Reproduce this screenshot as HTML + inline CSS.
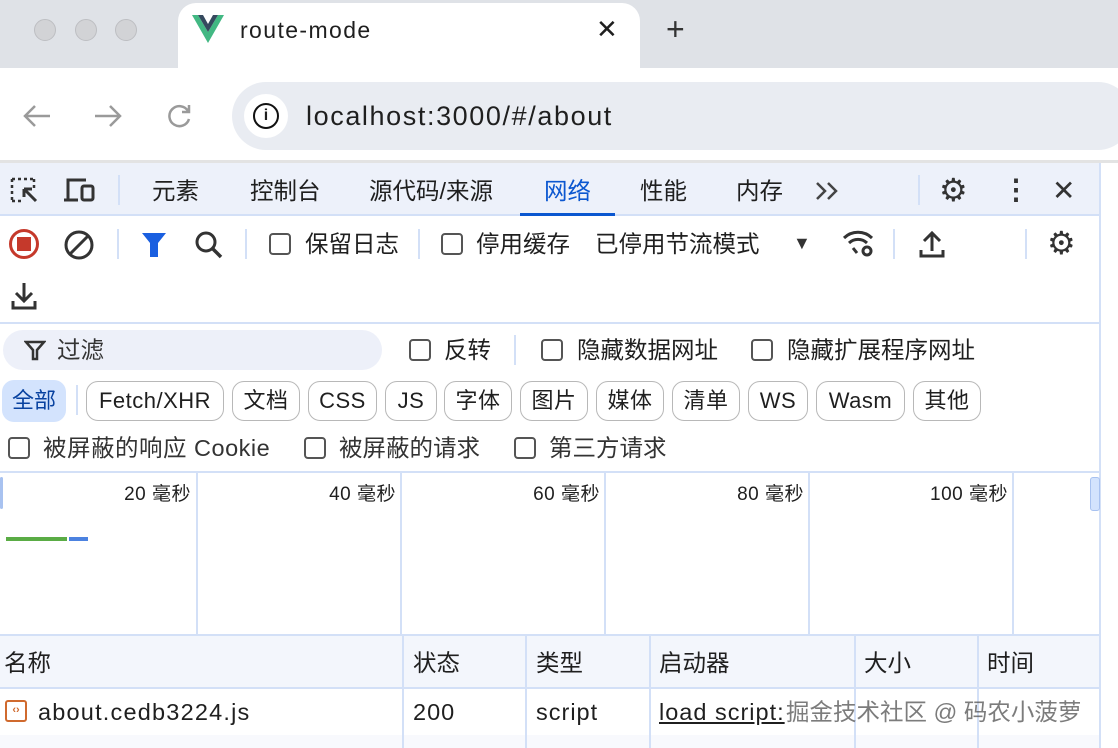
<!DOCTYPE html>
<html><head><meta charset="utf-8"><style>
*{margin:0;padding:0;box-sizing:border-box}
body{width:1118px;height:748px;overflow:hidden;background:#fff;font-family:"Liberation Sans","Noto Sans CJK SC",sans-serif;color:#1f1f1f;position:relative}
.a{position:absolute;white-space:nowrap}
.t{font-size:23.5px;line-height:26px}
.cb{position:absolute;width:20px;height:20px;border:2px solid #555;border-radius:4px}
.chip{position:absolute;top:381px;height:40px;border:1.5px solid #b8b8b8;border-radius:12px;font-size:22px;line-height:37px;text-align:center;color:#1f1f1f;letter-spacing:0.5px}
.vl{position:absolute;width:2px;background:#d3e0f7}
.hl{position:absolute;height:2px;background:#d3e0f7}
.tl{position:absolute;top:484px;width:196px;text-align:right;font-size:19px;line-height:22px;letter-spacing:0.5px}
</style></head><body>
<div class="a" style="left:0;top:0;width:1118px;height:68px;background:#dfe2e7"></div>
<div class="a" style="left:34px;top:19px;width:22px;height:22px;border-radius:50%;background:#d2d3d6;border:1px solid #bdbec2"></div>
<div class="a" style="left:75px;top:19px;width:22px;height:22px;border-radius:50%;background:#d2d3d6;border:1px solid #bdbec2"></div>
<div class="a" style="left:115px;top:19px;width:22px;height:22px;border-radius:50%;background:#d2d3d6;border:1px solid #bdbec2"></div>
<div class="a" style="left:178px;top:3px;width:462px;height:70px;background:#fff;border-radius:18px 18px 0 0"></div>
<svg class="a" style="left:192px;top:15px" width="32" height="28" viewBox="0 0 32 28"><path d="M0 0h6l10 17 10-17h6L16 28z" fill="#42b883"/><path d="M6 0h5l5 9 5-9h5L16 17z" fill="#35495e"/></svg>
<div class="a" style="left:240px;top:16px;font-size:23px;line-height:28px;letter-spacing:1.4px">route-mode</div>
<div class="a" style="left:596px;top:15px;font-size:26px;line-height:28px">✕</div>
<div class="a" style="left:666px;top:12px;font-size:32px;line-height:34px;color:#333">+</div>
<svg class="a" style="left:22px;top:103px" width="30" height="26" viewBox="0 0 30 26"><path d="M28 13H3M13 3L3 13l10 10" stroke="#9a9a9a" stroke-width="2.5" fill="none"/></svg>
<svg class="a" style="left:93px;top:103px" width="30" height="26" viewBox="0 0 30 26"><path d="M2 13h25M17 3l10 10-10 10" stroke="#9a9a9a" stroke-width="2.5" fill="none"/></svg>
<svg class="a" style="left:166px;top:102px" width="28" height="28" viewBox="0 0 28 28"><path d="M22 9a10 10 0 1 0 1 8" stroke="#9a9a9a" stroke-width="2.5" fill="none"/><path d="M23 3v7h-7" stroke="#9a9a9a" stroke-width="2.5" fill="none"/></svg>
<div class="a" style="left:232px;top:82px;width:900px;height:68px;background:#e9ecf2;border-radius:34px"></div>
<div class="a" style="left:244px;top:94px;width:44px;height:44px;background:#fff;border-radius:50%"></div>
<div class="a" style="left:253px;top:103px;width:26px;height:26px;border:2.5px solid #111;border-radius:50%;font-size:16px;font-weight:bold;text-align:center;line-height:21px">i</div>
<div class="a" style="left:306px;top:100px;font-size:27px;line-height:32px;color:#1f1f1f;letter-spacing:1.6px">localhost:3000/#/about</div>
<div class="a" style="left:0;top:160px;width:1118px;height:3px;background:#e3e3e3"></div>
<div class="a" style="left:0;top:163px;width:1100px;height:53px;background:#edf1fa;border-bottom:2px solid #d3e0f7"></div>
<div class="vl" style="left:1099px;top:163px;height:585px"></div>
<svg class="a" style="left:10px;top:177px" width="30" height="28" viewBox="0 0 30 28"><path d="M2 2h22M2 2v22M2 24h10M24 2v10" stroke="#333" stroke-width="2.5" stroke-dasharray="3 3" fill="none"/><path d="M14 12l12 12M14 12v8M14 12h8" stroke="#333" stroke-width="3" fill="none"/></svg>
<svg class="a" style="left:62px;top:176px" width="34" height="28" viewBox="0 0 34 28"><path d="M6 24V4h18M2 24h14" stroke="#333" stroke-width="3" fill="none"/><rect x="20" y="10" width="11" height="14" rx="2" stroke="#333" stroke-width="3" fill="none"/></svg>
<div class="vl" style="left:118px;top:175px;height:30px"></div>
<div class="a t" style="left:152px;top:178px">元素</div>
<div class="a t" style="left:250px;top:178px">控制台</div>
<div class="a t" style="left:369px;top:178px">源代码/来源</div>
<div class="a t" style="left:544px;top:178px;color:#0b57d0">网络</div>
<div class="a" style="left:520px;top:213px;width:95px;height:3px;background:#0b57d0"></div>
<div class="a t" style="left:640px;top:178px">性能</div>
<div class="a t" style="left:736px;top:178px">内存</div>
<svg class="a" style="left:815px;top:181px" width="26" height="20" viewBox="0 0 26 20"><path d="M2 2l8 8-8 8M13 2l8 8-8 8" stroke="#444" stroke-width="2.5" fill="none"/></svg>
<div class="vl" style="left:918px;top:175px;height:30px"></div>
<div class="a" style="left:939px;top:173px;font-size:32px;line-height:34px;color:#333">⚙</div>
<div class="a" style="left:1002px;top:174px;font-size:28px;line-height:32px;font-weight:bold;color:#333">⋮</div>
<div class="a" style="left:1052px;top:175px;font-size:28px;line-height:32px;color:#333">✕</div>
<div class="a" style="left:9px;top:229px;width:30px;height:30px;border:3px solid #c5392b;border-radius:50%"></div>
<div class="a" style="left:17px;top:237px;width:14px;height:14px;background:#c5392b"></div>
<svg class="a" style="left:63px;top:229px" width="32" height="32" viewBox="0 0 32 32"><circle cx="16" cy="16" r="13" stroke="#333" stroke-width="3" fill="none"/><path d="M7 25L25 7" stroke="#333" stroke-width="3"/></svg>
<div class="vl" style="left:117px;top:229px;height:30px"></div>
<svg class="a" style="left:141px;top:232px" width="26" height="26" viewBox="0 0 26 26"><path d="M1 1h24l-8 10v14h-8V11z" fill="#1a5fe0"/></svg>
<svg class="a" style="left:194px;top:230px" width="30" height="30" viewBox="0 0 30 30"><circle cx="12" cy="12" r="9" stroke="#333" stroke-width="3" fill="none"/><path d="M19 19l8 8" stroke="#333" stroke-width="3.5"/></svg>
<div class="vl" style="left:245px;top:229px;height:30px"></div>
<div class="cb" style="left:269px;top:233px;width:22px;height:22px"></div>
<div class="a t" style="left:305px;top:231px">保留日志</div>
<div class="vl" style="left:418px;top:229px;height:30px"></div>
<div class="cb" style="left:441px;top:233px;width:22px;height:22px"></div>
<div class="a t" style="left:476px;top:231px">停用缓存</div>
<div class="a t" style="left:595px;top:231px">已停用节流模式</div>
<div class="a" style="left:793px;top:233px;font-size:18px;color:#333">▼</div>
<svg class="a" style="left:842px;top:229px" width="34" height="28" viewBox="0 0 34 28"><path d="M2 9a20 20 0 0 1 28 0M7 14a13 13 0 0 1 18 0" stroke="#333" stroke-width="3" fill="none"/><path d="M11 19l4 5" stroke="#333" stroke-width="3"/><circle cx="25" cy="22" r="4" stroke="#333" stroke-width="3" fill="none"/></svg>
<div class="vl" style="left:893px;top:229px;height:30px"></div>
<svg class="a" style="left:918px;top:229px" width="28" height="30" viewBox="0 0 28 30"><path d="M14 22V4M6 12l8-8 8 8M3 21v6h22v-6" stroke="#333" stroke-width="3" fill="none"/></svg>
<div class="vl" style="left:1025px;top:229px;height:30px"></div>
<div class="a" style="left:1047px;top:226px;font-size:32px;line-height:34px;color:#333">⚙</div>
<svg class="a" style="left:10px;top:281px" width="28" height="30" viewBox="0 0 28 30"><path d="M14 2v18M6 12l8 8 8-8M3 20v7h22v-7" stroke="#333" stroke-width="3" fill="none"/></svg>
<div class="hl" style="left:0;top:322px;width:1100px"></div>
<div class="a" style="left:3px;top:330px;width:379px;height:40px;background:#edf0f9;border-radius:20px"></div>
<svg class="a" style="left:24px;top:339px" width="22" height="22" viewBox="0 0 22 22"><path d="M2 3h18l-7 8v9h-4v-9z" stroke="#333" stroke-width="2.5" fill="none"/></svg>
<div class="a t" style="left:57px;top:337px;color:#333">过滤</div>
<div class="cb" style="left:409px;top:339px;width:22px;height:22px"></div>
<div class="a t" style="left:444px;top:337px">反转</div>
<div class="vl" style="left:514px;top:335px;height:30px"></div>
<div class="cb" style="left:541px;top:339px;width:22px;height:22px"></div>
<div class="a t" style="left:577px;top:337px">隐藏数据网址</div>
<div class="cb" style="left:751px;top:339px;width:22px;height:22px"></div>
<div class="a t" style="left:787px;top:337px">隐藏扩展程序网址</div>
<div class="a" style="left:2px;top:380px;width:64px;height:42px;background:#d3e3fd;border-radius:12px;font-size:22px;line-height:42px;text-align:center;color:#0842a0">全部</div>
<div class="vl" style="left:76px;top:385px;height:30px"></div>
<div class="chip" style="left:86px;width:138px">Fetch/XHR</div>
<div class="chip" style="left:232px;width:68px">文档</div>
<div class="chip" style="left:308px;width:69px">CSS</div>
<div class="chip" style="left:385px;width:52px">JS</div>
<div class="chip" style="left:444px;width:68px">字体</div>
<div class="chip" style="left:520px;width:68px">图片</div>
<div class="chip" style="left:596px;width:68px">媒体</div>
<div class="chip" style="left:672px;width:68px">清单</div>
<div class="chip" style="left:748px;width:60px">WS</div>
<div class="chip" style="left:816px;width:89px">Wasm</div>
<div class="chip" style="left:913px;width:68px">其他</div>
<div class="cb" style="left:8px;top:437px;width:22px;height:22px"></div>
<div class="a t" style="left:43px;top:435px;color:#333;letter-spacing:0.5px">被屏蔽的响应 Cookie</div>
<div class="cb" style="left:304px;top:437px;width:22px;height:22px"></div>
<div class="a t" style="left:339px;top:435px;color:#333">被屏蔽的请求</div>
<div class="cb" style="left:514px;top:437px;width:22px;height:22px"></div>
<div class="a t" style="left:549px;top:435px;color:#333">第三方请求</div>
<div class="hl" style="left:0;top:471px;width:1100px"></div>
<div class="vl" style="left:196px;top:472px;height:163px"></div>
<div class="vl" style="left:400px;top:472px;height:163px"></div>
<div class="vl" style="left:604px;top:472px;height:163px"></div>
<div class="vl" style="left:808px;top:472px;height:163px"></div>
<div class="vl" style="left:1012px;top:472px;height:163px"></div>
<div class="a" style="left:0;top:477px;width:3px;height:32px;background:#a8c2f0;border-radius:2px"></div>
<div class="a" style="left:1090px;top:477px;width:10px;height:34px;background:#d3e3fd;border:1px solid #a8c2f0;border-radius:3px"></div>
<div class="tl" style="left:-5px">20 毫秒</div>
<div class="tl" style="left:200px">40 毫秒</div>
<div class="tl" style="left:404px">60 毫秒</div>
<div class="tl" style="left:608px">80 毫秒</div>
<div class="tl" style="left:812px">100 毫秒</div>
<div class="a" style="left:6px;top:537px;width:61px;height:4px;background:#5aac45"></div>
<div class="a" style="left:69px;top:537px;width:19px;height:4px;background:#4c82e0"></div>
<div class="hl" style="left:0;top:634px;width:1100px"></div>
<div class="a" style="left:0;top:636px;width:1099px;height:52px;background:#f3f6fc"></div>
<div class="hl" style="left:0;top:687px;width:1100px"></div>
<div class="a" style="left:0;top:735px;width:1099px;height:13px;background:#f8f9fd"></div>
<div class="vl" style="left:402px;top:636px;height:112px"></div>
<div class="vl" style="left:525px;top:636px;height:112px"></div>
<div class="vl" style="left:649px;top:636px;height:112px"></div>
<div class="vl" style="left:854px;top:636px;height:112px"></div>
<div class="vl" style="left:977px;top:636px;height:112px"></div>
<div class="a t" style="left:4px;top:650px">名称</div>
<div class="a t" style="left:413px;top:650px">状态</div>
<div class="a t" style="left:536px;top:650px">类型</div>
<div class="a t" style="left:659px;top:650px">启动器</div>
<div class="a t" style="left:864px;top:650px">大小</div>
<div class="a t" style="left:987px;top:650px">时间</div>
<div class="a" style="left:5px;top:700px;width:22px;height:22px;border:2px solid #d06a2e;border-radius:3px;font-size:11px;line-height:17px;text-align:center;color:#d06a2e;font-weight:bold">‹›</div>
<div class="a t" style="left:38px;top:699px;letter-spacing:1.2px">about.cedb3224.js</div>
<div class="a t" style="left:413px;top:699px;letter-spacing:1px">200</div>
<div class="a t" style="left:536px;top:699px;letter-spacing:1px">script</div>
<div class="a t" style="left:659px;top:699px;text-decoration:underline;letter-spacing:1px">load script:</div>
<div class="a t" style="left:786px;top:699px;color:rgba(80,80,80,0.75)">掘金技术社区 @ 码农小菠萝</div>
</body></html>
